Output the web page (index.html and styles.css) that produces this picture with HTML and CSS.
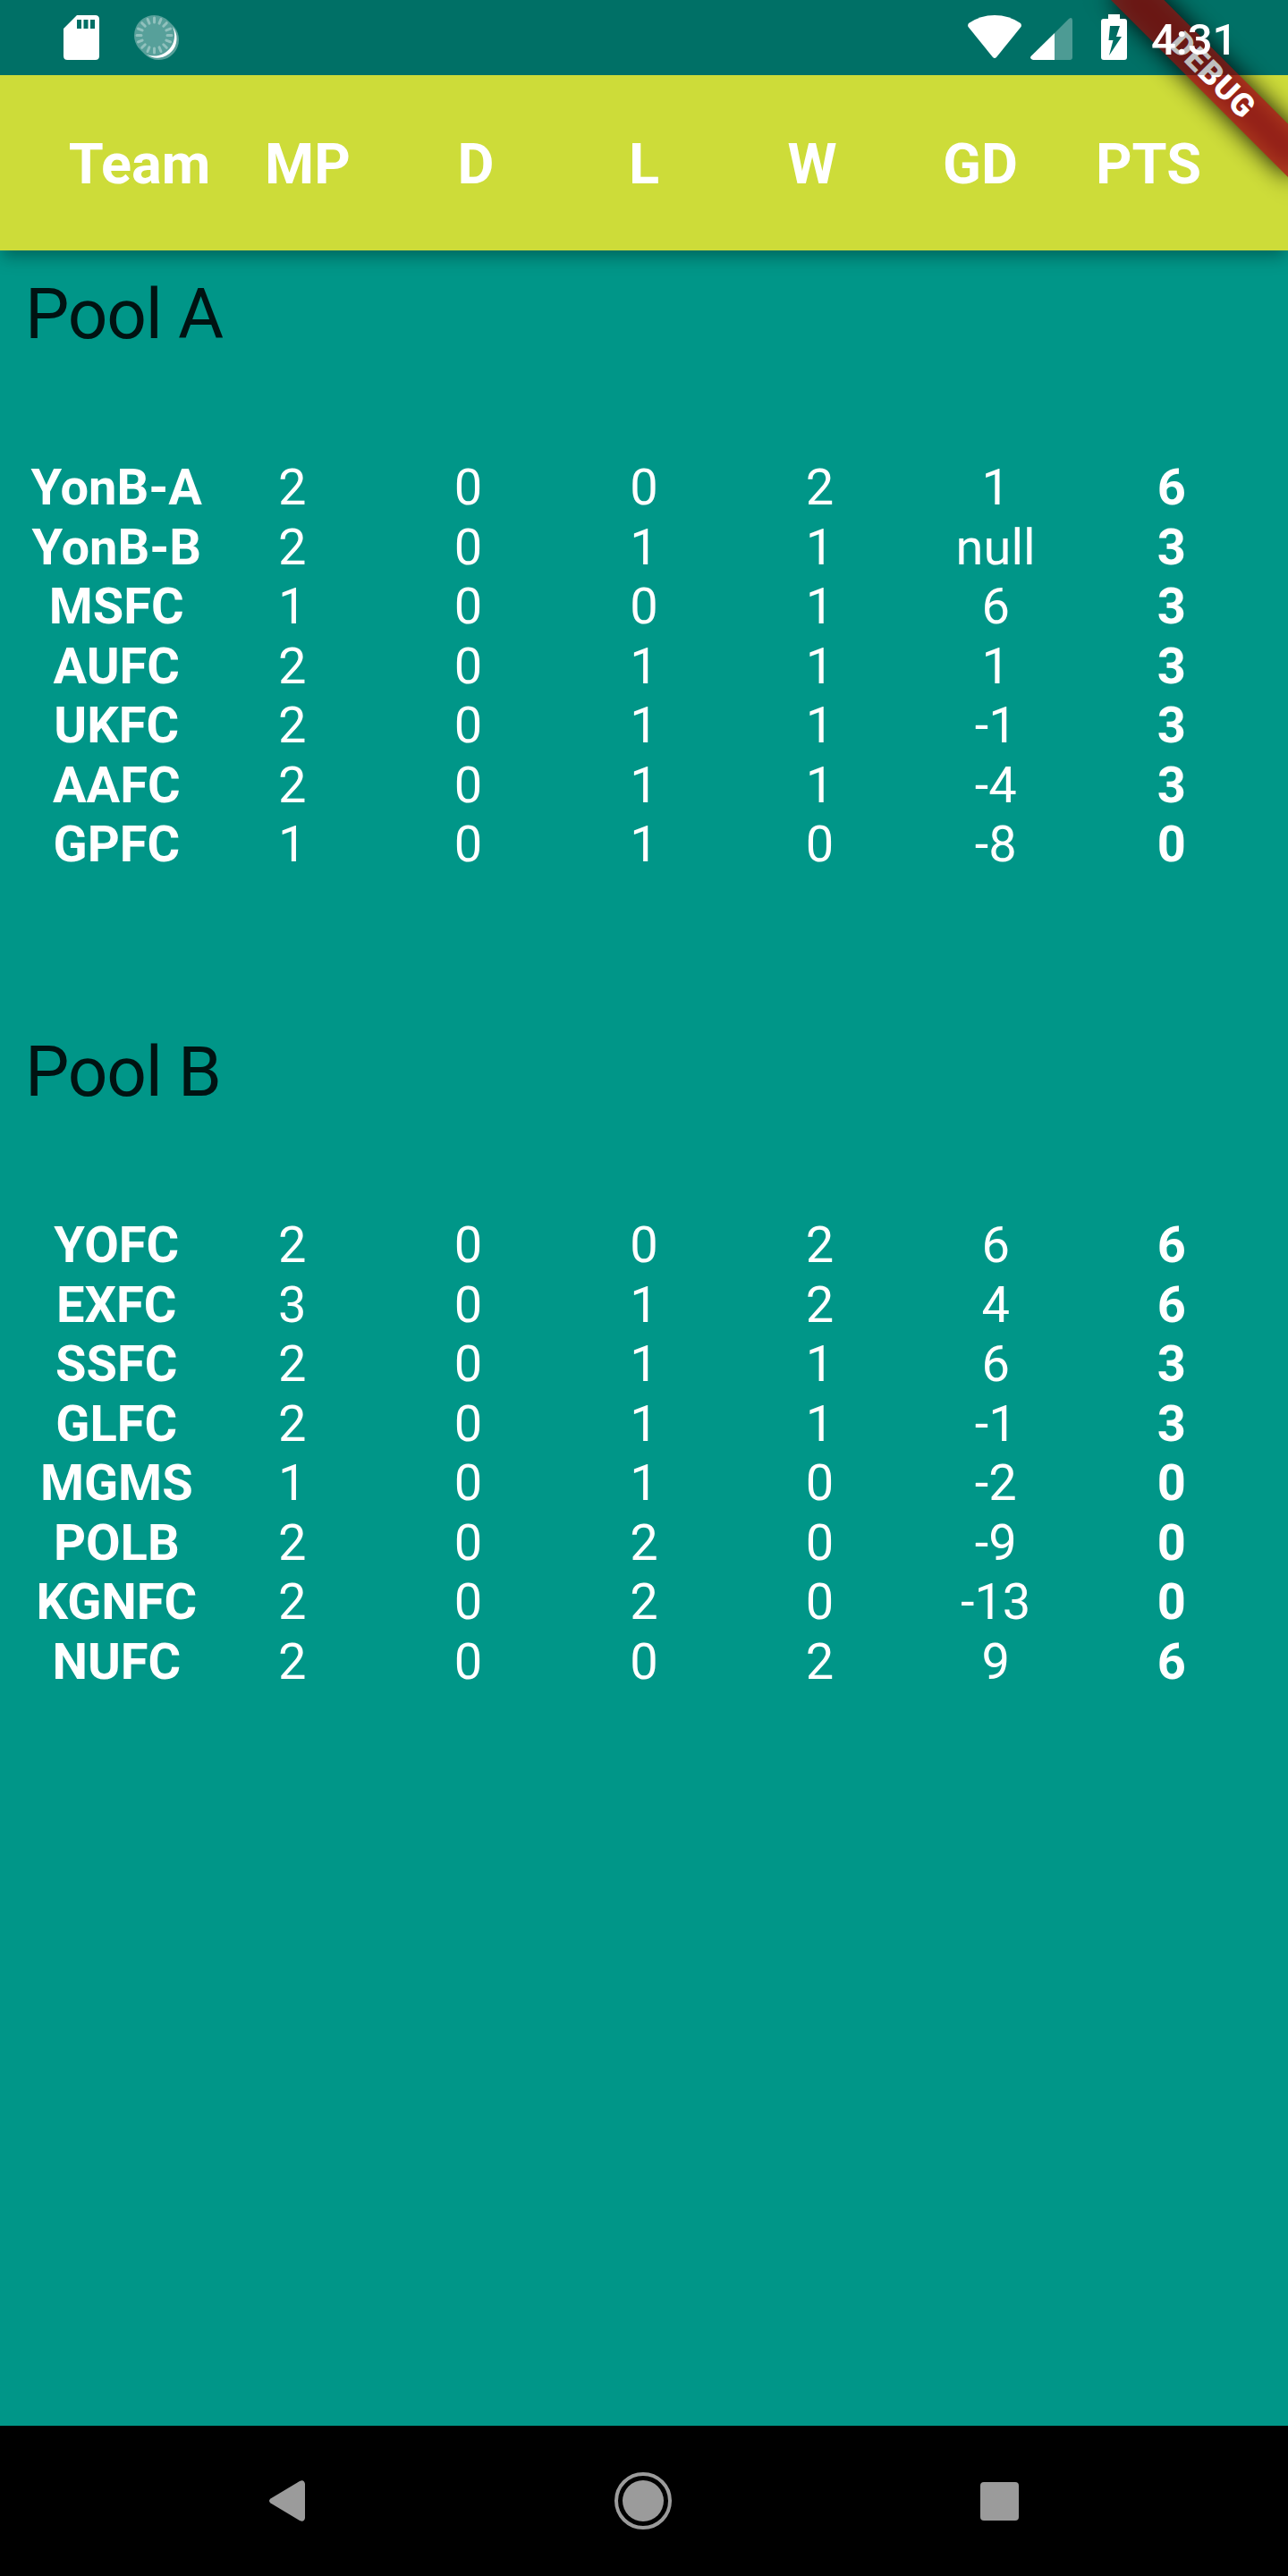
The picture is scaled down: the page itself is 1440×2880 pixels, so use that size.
FILE: index.html
```html
<!DOCTYPE html>
<html lang="en">
<head>
<meta charset="utf-8">
<title>Standings</title>
<link rel="stylesheet" href="styles.css">
</head>
<body>
<div class="screen">
  <div class="status-bar">
    <svg class="icon-sd" width="40" height="50" viewBox="0 0 40 50"><path fill="#fff" fill-rule="evenodd" d="M15 0H35.500Q40 0 40 4.500V45.500Q40 50 35.500 50H4.500Q0 50 0 45.500V15ZM15 5V15H20V5ZM22.500 5V15H27.500V5ZM30 5V15H35V5Z"/></svg>
    <svg class="icon-sync" width="50" height="50" viewBox="0 0 50 50">
      <path fill="#fff" fill-opacity=".34" d="M22.500 0A22.500 22.500 0 0 1 38.400 6.600L43.400 11.600A22.500 22.500 0 0 1 27.500 50A22.500 22.500 0 0 1 11.600 43.400L6.600 38.400A22.500 22.500 0 0 1 22.500 0Z"/>
      <path fill="#fff" d="M43 13A21.500 21.500 0 0 1 14 44A22.900 22.900 0 0 0 43 13Z"/>
      <g stroke="#fff" stroke-opacity=".35" stroke-width="3" stroke-linecap="round" fill="none">
        <path id="spoke" d="M22.500 3V8M22.500 37V42M3 22.500H8M37 22.500H42"/>
        <use href="#spoke" transform="rotate(22.500 22.500 22.500)"/>
        <use href="#spoke" transform="rotate(45 22.500 22.500)"/>
        <use href="#spoke" transform="rotate(67.500 22.500 22.500)"/>
      </g>
    </svg>
    <svg class="icon-wifi" width="60" height="48" viewBox="0 0 60 48"><path fill="#fff" d="M1 9Q14 0 30 0T59 9Q60.500 11 59.500 13L32 47Q30 49 28 47L.5 13Q-.5 11 1 9Z"/></svg>
    <svg class="icon-signal" width="47" height="47" viewBox="0 0 47 47"><path fill="#fff" fill-opacity=".3" d="M27 17L43 1Q47-1.500 47 3V44Q47 47 44 47H27Z"/><path fill="#fff" d="M27 17V47H3Q-1 46 .5 43Z"/></svg>
    <svg class="icon-battery" width="29" height="51" viewBox="0 0 29 51"><path fill="#fff" fill-rule="evenodd" d="M8 0H21V5H26Q29 5 29 8V48Q29 51 26 51H3Q0 51 0 48V8Q0 5 3 5H8ZM10 13L8.500 29H13.500L9 46L23 25H17L21 13Z"/></svg>
    <span class="clock">4:31</span>
  </div>

  <header class="app-bar">
    <span>Team</span><span>MP</span><span>D</span><span>L</span><span>W</span><span>GD</span><span>PTS</span>
  </header>

  <main class="pools">
    <section class="pool">
      <h2>Pool A</h2>
      <div class="table">
        <b>YonB-A</b><span>2</span><span>0</span><span>0</span><span>2</span><span>1</span><b>6</b>
        <b>YonB-B</b><span>2</span><span>0</span><span>1</span><span>1</span><span>null</span><b>3</b>
        <b>MSFC</b><span>1</span><span>0</span><span>0</span><span>1</span><span>6</span><b>3</b>
        <b>AUFC</b><span>2</span><span>0</span><span>1</span><span>1</span><span>1</span><b>3</b>
        <b>UKFC</b><span>2</span><span>0</span><span>1</span><span>1</span><span>-1</span><b>3</b>
        <b>AAFC</b><span>2</span><span>0</span><span>1</span><span>1</span><span>-4</span><b>3</b>
        <b>GPFC</b><span>1</span><span>0</span><span>1</span><span>0</span><span>-8</span><b>0</b>
      </div>
    </section>
    <section class="pool">
      <h2>Pool B</h2>
      <div class="table">
        <b>YOFC</b><span>2</span><span>0</span><span>0</span><span>2</span><span>6</span><b>6</b>
        <b>EXFC</b><span>3</span><span>0</span><span>1</span><span>2</span><span>4</span><b>6</b>
        <b>SSFC</b><span>2</span><span>0</span><span>1</span><span>1</span><span>6</span><b>3</b>
        <b>GLFC</b><span>2</span><span>0</span><span>1</span><span>1</span><span>-1</span><b>3</b>
        <b>MGMS</b><span>1</span><span>0</span><span>1</span><span>0</span><span>-2</span><b>0</b>
        <b>POLB</b><span>2</span><span>0</span><span>2</span><span>0</span><span>-9</span><b>0</b>
        <b>KGNFC</b><span>2</span><span>0</span><span>2</span><span>0</span><span>-13</span><b>0</b>
        <b>NUFC</b><span>2</span><span>0</span><span>0</span><span>2</span><span>9</span><b>6</b>
      </div>
    </section>
  </main>

  <nav class="nav-bar">
    <svg width="40" height="46" viewBox="0 0 40 46"><path fill="#9b9b9b" d="M1.500 20.500L34 1Q39-1.500 40 4V42Q39 47.500 34 45L1.500 25.500Q-1.500 23 1.500 20.500Z"/></svg>
    <svg width="64" height="64" viewBox="0 0 64 64"><circle cx="32" cy="32" r="30" fill="none" stroke="#9b9b9b" stroke-width="4"/><circle cx="32" cy="32" r="23" fill="#9b9b9b"/></svg>
    <svg width="43" height="43" viewBox="0 0 43 43"><rect width="43" height="43" rx="4" fill="#9b9b9b"/></svg>
  </nav>

  <div class="debug-corner"><div class="debug-banner"><span>DEBUG</span></div></div>
</div>
</body>
</html>
```
FILE: styles.css
```css
* { box-sizing: border-box; }

body { margin: 0; }

.screen {
  position: relative;
  display: flex;
  flex-direction: column;
  width: 1440px;
  height: 2880px;
  overflow: hidden;
  background: #009688;
  color: #fff;
  font-family: Roboto, sans-serif;
}

/* Translucent system bar, drawn above the debug ribbon */
.status-bar {
  position: relative;
  z-index: 3;
  display: flex;
  align-items: flex-start;
  height: 84px;
  padding: 17px 63px 0 71px;
  background: rgba(0, 0, 0, .25);
}
.status-bar svg { display: block; flex: none; }
.icon-sync { margin-left: 39px; }
.icon-wifi { margin-left: auto; }
.icon-signal { margin: 3px 0 0 10px; }
.icon-battery { margin: -1px 0 0 32px; }
.clock {
  width: 90px;
  margin: -1px 0 0 27px;
  font-size: 49px;
  font-weight: 500;
  line-height: 58px;
  white-space: nowrap;
}

.app-bar {
  position: relative;
  z-index: 1;
  display: grid;
  grid-template-columns: repeat(7, 188px);
  align-items: center;
  height: 196px;
  padding: 2px 62px 0;
  background: #cddc39;
  font-size: 63px;
  font-weight: 700;
  text-align: center;
}
.app-bar {
  box-shadow: 0 10px 14px -4px rgba(0, 0, 0, .22),
              0 8px 22px 0 rgba(0, 0, 0, .12);
  clip-path: inset(0 0 -60px 0);
}

.pools {
  display: flex;
  flex: 1;
  flex-direction: column;
  gap: 174.5px;
  padding-top: 25px;
}
.pool h2 {
  margin: 0 0 115px;
  padding-left: 28px;
  color: rgba(0, 0, 0, .87);
  font-size: 78.4px;
  font-weight: 400;
  letter-spacing: -1.2px;
  line-height: 92px;
}
.table {
  display: grid;
  grid-template-columns: repeat(7, 1fr);
  grid-auto-rows: 66.5px;
  padding: 0 32px;
  font-size: 56px;
  line-height: 66.5px;
  text-align: center;
}
.table b { font-weight: 700; }

.nav-bar {
  display: flex;
  align-items: center;
  justify-content: space-between;
  height: 168px;
  padding: 0 301px;
  background: #000;
}

/* Diagonal ribbon pinned to the top right corner */
.debug-corner {
  position: absolute;
  z-index: 2;
  top: 0;
  left: 1440px;
  transform: rotate(45deg);
  transform-origin: 0 0;
}
.debug-banner {
  position: absolute;
  top: 98px;
  left: -140px;
  width: 280px;
  height: 42px;
  font-size: 35.7px;
  font-weight: 900;
  letter-spacing: .8px;
  line-height: 42px;
  text-align: center;
}
.debug-banner::before,
.debug-banner::after {
  content: "";
  position: absolute;
  inset: 0;
}
.debug-banner::before {
  background: rgba(0, 0, 0, .93);
  filter: blur(13.9px);
}
.debug-banner::after { background: rgba(178, 32, 28, .8); }
.debug-banner span { position: relative; z-index: 1; }
```
